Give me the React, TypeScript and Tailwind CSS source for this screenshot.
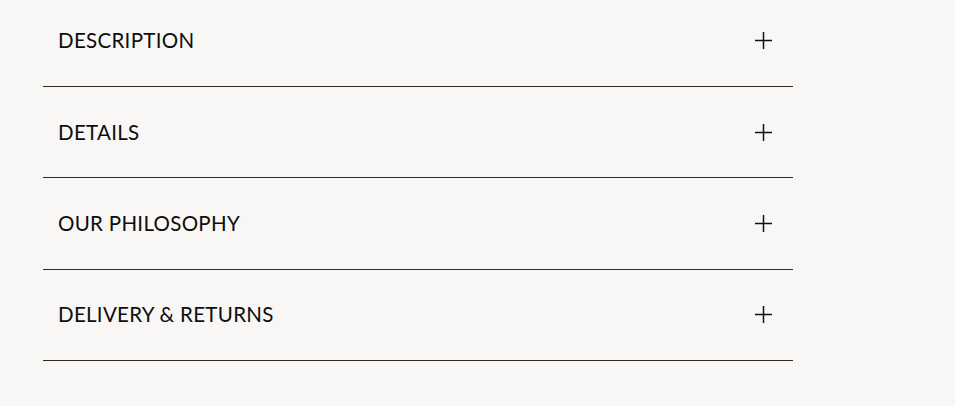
import React from 'react';

const ITEMS = ['DESCRIPTION', 'DETAILS', 'OUR PHILOSOPHY', 'DELIVERY & RETURNS'];

const PlusIcon = () => (
  <svg width="17" height="17" viewBox="0 0 17 17" fill="none" stroke="#111" strokeWidth="1.5">
    <path d="M0 8.5H17" />
    <path d="M8.5 0V17" />
  </svg>
);

export default function App() {
  return (
    <div className="w-[955px] h-[406px] overflow-hidden bg-[#f8f7f5] font-['Lato','Liberation_Sans',sans-serif]">
      <div className="ml-[43px] w-[750px] -mt-[4.4px]">
        {ITEMS.map((label) => (
          <div key={label} className="border-b border-[#2d2a26]">
            <button className="w-full h-[90.35px] flex items-center justify-between pl-[15px] pr-[21px] text-left">
              <span className="text-[20.5px] text-[#0d0d0d] tracking-[0.3px]">{label}</span>
              <PlusIcon />
            </button>
          </div>
        ))}
      </div>
    </div>
  );
}
